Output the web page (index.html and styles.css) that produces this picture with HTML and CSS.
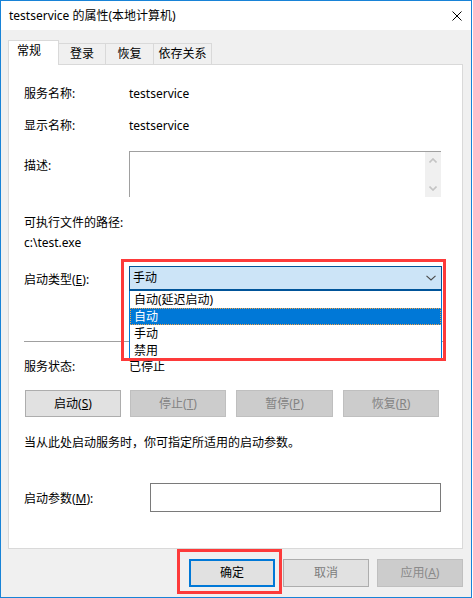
FILE: index.html
```html
<!DOCTYPE html>
<html lang="zh-CN">
<head>
<meta charset="utf-8">
<title>testservice 的属性(本地计算机)</title>
<link rel="stylesheet" href="styles.css">
</head>
<body>
<div class="window">
  <div class="titlebar">
    <span class="title">testservice 的属性(本地计算机)</span>
    <svg class="close" width="10" height="10" viewBox="0 0 10 10"><path d="M0.5 0.5L9.5 9.5M9.5 0.5L0.5 9.5" stroke="#000" stroke-width="1" fill="none"/></svg>
  </div>
  <div class="body">
    <div class="tabs">
      <div class="tab tab-active">常规</div>
      <div class="tab tab-login">登录</div>
      <div class="tab tab-recover">恢复</div>
      <div class="tab tab-deps">依存关系</div>
    </div>
    <div class="panel">
      <div class="row r-name"><span class="label">服务名称:</span><span class="value">testservice</span></div>
      <div class="row r-display"><span class="label">显示名称:</span><span class="value">testservice</span></div>
      <div class="desc-row">
        <span class="label desc-label">描述:</span>
        <div class="textarea">
          <div class="ta-content"></div>
          <div class="scrollbar">
            <svg width="8" height="5" viewBox="0 0 8 5"><path d="M0.5 4.5L4 1L7.5 4.5" fill="none" stroke="#c4c4c4" stroke-width="1.6"/></svg>
            <svg width="8" height="5" viewBox="0 0 8 5"><path d="M0.5 0.5L4 4L7.5 0.5" fill="none" stroke="#c4c4c4" stroke-width="1.6"/></svg>
          </div>
        </div>
      </div>
      <div class="row r-path">可执行文件的路径:</div>
      <div class="row r-exe">c:\test.exe</div>
      <div class="combo-row">
        <span class="label">启动类型(<u>E</u>):</span>
        <div class="combo-wrap">
          <div class="combo">
            <span>手动</span>
            <svg width="10" height="6" viewBox="0 0 10 6"><path d="M0.5 0.8L5 5L9.5 0.8" fill="none" stroke="#4a4a4a" stroke-width="1.1"/></svg>
          </div>
          <div class="dropdown">
            <div class="opt">自动(延迟启动)</div>
            <div class="opt opt-sel">自动</div>
            <div class="opt">手动</div>
            <div class="opt">禁用</div>
          </div>
          <div class="highlight hl-combo"></div>
        </div>
      </div>
      <div class="separator"></div>
      <div class="row r-status"><span class="label">服务状态:</span><span class="value">已停止</span></div>
      <div class="btn-row">
        <div class="btn">启动(<u>S</u>)</div>
        <div class="btn btn-disabled">停止(<u>T</u>)</div>
        <div class="btn btn-disabled btn-wide">暂停(<u>P</u>)</div>
        <div class="btn btn-disabled">恢复(<u>R</u>)</div>
      </div>
      <div class="row r-note">当从此处启动服务时，你可指定所适用的启动参数。</div>
      <div class="param-row">
        <span class="label param-label">启动参数(<u>M</u>):</span>
        <div class="param-input"></div>
      </div>
    </div>
    <div class="actions">
      <div class="abtn abtn-ok">确定<div class="highlight hl-ok"></div></div>
      <div class="abtn abtn-cancel">取消</div>
      <div class="abtn abtn-apply">应用(<u>A</u>)</div>
    </div>
  </div>
</div>
</body>
</html>
```

FILE: styles.css
```css
* { box-sizing: border-box; }
html, body { margin: 0; padding: 0; background: #fff; }
body {
  font-family: "Noto Sans", "Noto Sans CJK SC", sans-serif;
  font-size: 12px;
  color: #000;
}
u { text-decoration: underline; text-underline-offset: 1px; }

.window {
  width: 472px;
  height: 598px;
  border: 1px solid #1883d7;
  display: flex;
  flex-direction: column;
  background: #f0f0f0;
}

.titlebar {
  height: 29px;
  flex: none;
  background: #fff;
  display: flex;
  align-items: center;
  justify-content: space-between;
  padding: 0 9px 0 8px;
}
.title { font-size: 12px; line-height: 16px; margin-top: 1px; }
.close { display: block; margin-top: 1px; }

.body {
  flex: 1;
  display: flex;
  flex-direction: column;
  padding: 0 8px 0 7px;
}

.tabs {
  margin-top: 10px;
  height: 24px;
  display: flex;
  align-items: flex-end;
}
.tab {
  height: 21px;
  border-top: 1px solid #d9d9d9;
  border-right: 1px solid #d9d9d9;
  display: flex;
  align-items: center;
  justify-content: center;
  line-height: 16px;
  padding-bottom: 1px;
}
.tab-active {
  position: relative;
  z-index: 1;
  height: 25px;
  margin-bottom: -1px;
  width: 51px;
  background: #fff;
  border-left: 1px solid #d9d9d9;
  justify-content: flex-start;
  padding-left: 8px;
  padding-bottom: 5px;
}
.tab-login { width: 47px; }
.tab-recover { width: 48px; }
.tab-deps { width: 58px; }

.panel {
  width: 455px;
  background: #fff;
  border: 1px solid #d9d9d9;
  padding: 19px 16px 36px 15px;
  display: flex;
  flex-direction: column;
}

.row {
  display: flex;
  align-items: center;
  height: 20px;
  line-height: 20px;
  white-space: nowrap;
}
.label { width: 105px; flex: none; }
.r-display { margin-top: 12px; }

.desc-row {
  margin-top: 15px;
  display: flex;
  align-items: flex-start;
}
.desc-label { margin-top: 5px; line-height: 20px; }
.textarea {
  width: 312px;
  height: 46px;
  border-top: 1px solid #a0a0a0;
  border-left: 1px solid #a0a0a0;
  display: flex;
}
.ta-content { flex: 1; }
.scrollbar {
  width: 16px;
  background: #f0f0f0;
  display: flex;
  flex-direction: column;
  justify-content: space-between;
  align-items: center;
  padding: 6px 0 6px;
}
.scrollbar svg { display: block; }

.r-path { margin-top: 16px; }
.r-exe { margin-top: 0; }

.combo-row {
  margin-top: 13px;
  display: flex;
  align-items: center;
  height: 25px;
}
.combo-wrap {
  position: relative;
  width: 313px;
  height: 25px;
}
.combo {
  height: 25px;
  background: #cce4f7;
  border: 1px solid #005499;
  border-bottom-width: 2px;
  display: flex;
  align-items: center;
  justify-content: space-between;
  padding: 0 5px 0 3px;
  line-height: 16px;
}
.combo svg { display: block; }
.dropdown {
  position: absolute;
  left: 0;
  top: 25px;
  width: 313px;
  background: #fff;
  border: 1px solid #0078d7;
  border-top: none;
  z-index: 2;
  padding-bottom: 1px;
}
.opt {
  height: 17px;
  line-height: 16px;
  padding: 0 3px;
  border: 1px solid transparent;
  white-space: nowrap;
}
.opt-sel {
  background: #0078d7;
  color: #fff;
  border: 1px dotted #f1a24a;
}

.highlight {
  position: absolute;
  border: 3px solid #fd3a3a;
  z-index: 3;
  pointer-events: none;
}
.hl-combo { left: -8px; top: -7px; width: 325px; height: 102px; }

.separator {
  margin-top: 50px;
  height: 1px;
  background: #a0a0a0;
}

.r-status { margin-top: 15px; }

.btn-row {
  margin-top: 13px;
  display: flex;
  gap: 9px;
  padding-left: 1px;
}
.btn {
  width: 96px;
  height: 27px;
  background: #e1e1e1;
  border: 1px solid #adadad;
  display: flex;
  align-items: center;
  justify-content: center;
  line-height: 16px;
}
.btn-wide { width: 97px; margin-left: 1px; margin-right: 1px; }
.btn-disabled {
  background: #cccccc;
  border-color: #bfbfbf;
  color: #838383;
}

.r-note { margin-top: 16px; }

.param-row {
  margin-top: 30px;
  display: flex;
  align-items: center;
  height: 29px;
}
.param-label { width: 126px; }
.param-input {
  width: 291px;
  height: 29px;
  border: 1px solid #7a7a7a;
  background: #fff;
}

.actions {
  margin-top: 10px;
  display: flex;
  justify-content: flex-end;
  gap: 8px;
}
.abtn {
  position: relative;
  width: 86px;
  height: 28px;
  background: #e1e1e1;
  border: 1px solid #adadad;
  display: flex;
  align-items: center;
  justify-content: center;
  line-height: 16px;
}
.abtn-ok { border: 2px solid #0078d7; }
.abtn-cancel { color: #7c7c7c; }
.abtn-apply {
  background: #cccccc;
  border-color: #bfbfbf;
  color: #8a8a8a;
}
.hl-ok { left: -14px; top: -12px; width: 105px; height: 45px; }
```
